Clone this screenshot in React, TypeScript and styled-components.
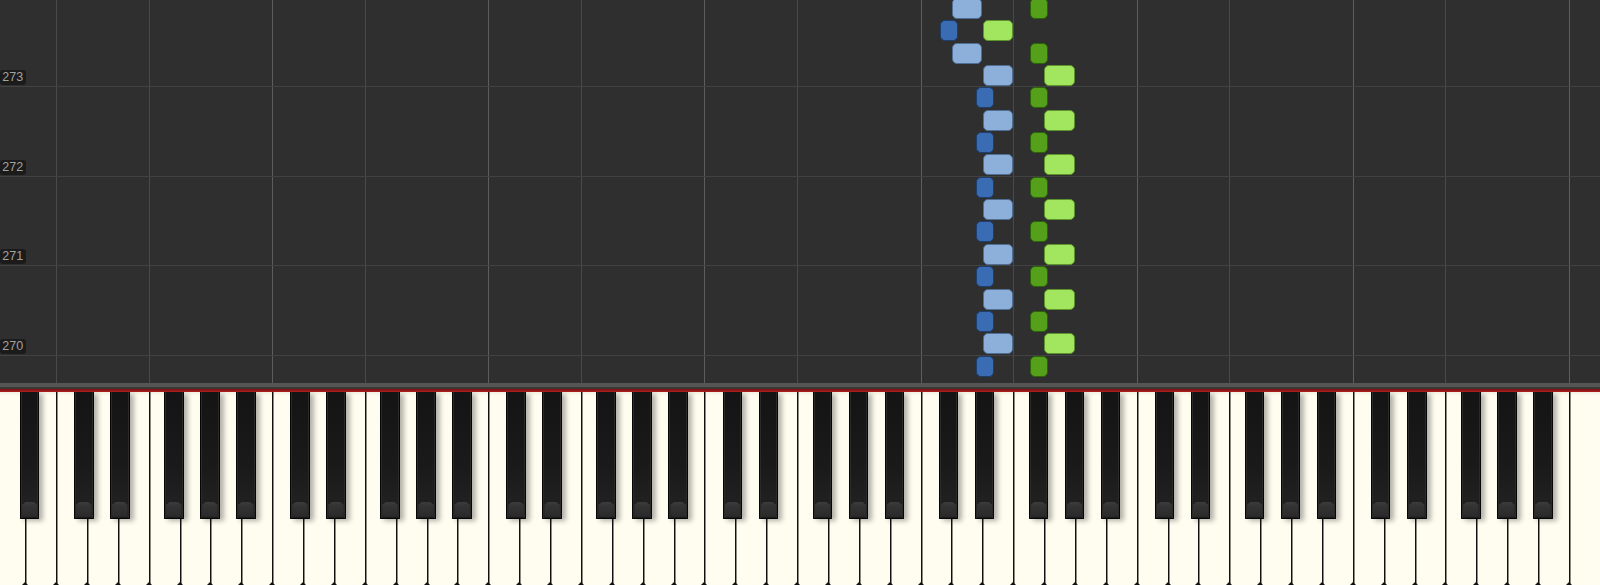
import React from "react";
import styled, { createGlobalStyle } from "styled-components";

// geometry of the 88-key keyboard (right aligned, A0 is a little cut off)
const KEY_W = 30.88;
const WHITE_COUNT = 52;
const STAGE_W = KEY_W * WHITE_COUNT;
const SEMI = (KEY_W * 7) / 12;
const ROW_H = 22.36;
const BEAT_H = ROW_H * 4;
const FIRST_ROW_TOP = 87.3 - 4 * ROW_H;

const WHITE_SEMIS = [0, 2, 4, 5, 7, 9, 11];
const SEMIS: Record<string, number> = {
  C: 0, "C#": 1, D: 2, "D#": 3, E: 4, F: 5, "F#": 6, G: 7, "G#": 8, A: 9, "A#": 10, B: 11,
};

const cLeft = (octave: number) => (2 + 7 * (octave - 1)) * KEY_W;

function keyGeom(name: string, octave: number) {
  const semi = SEMIS[name];
  const wi = WHITE_SEMIS.indexOf(semi);
  if (wi >= 0) return { left: cLeft(octave) + wi * KEY_W, black: false };
  return { left: cLeft(octave) + semi * SEMI, black: true };
}

type Track = "blue" | "green";
type NoteEv = { row: number; name: string; octave: number; track: Track };

const NOTES: NoteEv[] = [
  { row: 0, name: "D", octave: 5, track: "blue" },
  { row: 0, name: "F#", octave: 5, track: "green" },
  { row: 1, name: "C#", octave: 5, track: "blue" },
  { row: 1, name: "E", octave: 5, track: "green" },
  { row: 2, name: "D", octave: 5, track: "blue" },
  { row: 2, name: "F#", octave: 5, track: "green" },
  { row: 3, name: "E", octave: 5, track: "blue" },
  { row: 3, name: "G", octave: 5, track: "green" },
];
for (let r = 4; r <= 16; r++) {
  if (r % 2 === 0) {
    NOTES.push({ row: r, name: "D#", octave: 5, track: "blue" });
    NOTES.push({ row: r, name: "F#", octave: 5, track: "green" });
  } else {
    NOTES.push({ row: r, name: "E", octave: 5, track: "blue" });
    NOTES.push({ row: r, name: "G", octave: 5, track: "green" });
  }
}

// measure numbers; the last band runs past the bottom, so it gets no label
const MEASURES: (number | null)[] = [273, 272, 271, 270, null];

const TONES = {
  "blue-white": { fill: "#8cb0d9", edge: "#4f6f95" },
  "blue-black": { fill: "#3a6cb3", edge: "#1d3f70" },
  "green-white": { fill: "#a2e55e", edge: "#5e942c" },
  "green-black": { fill: "#55a01a", edge: "#2c620a" },
};
type Tone = keyof typeof TONES;

const GlobalStyle = createGlobalStyle`
  html, body {
    margin: 0;
    padding: 0;
    background: #2f2f2f;
  }
`;

const Viewport = styled.div`
  width: 1600px;
  height: 585px;
  overflow: hidden;
  background: #2f2f2f;
`;

const Stage = styled.div`
  width: ${STAGE_W}px;
  margin-left: ${1600 - STAGE_W}px;
  display: flex;
  flex-direction: column;
`;

const Roll = styled.div`
  height: 383.3px;
  display: grid;
  overflow: hidden;
  background: #2f2f2f;

  & > * {
    grid-area: 1 / 1;
  }
`;

const Columns = styled.div`
  display: flex;
  height: 100%;
`;

const Column = styled.div<{ $keys: number; $line: "none" | "dim" | "bright" }>`
  flex: 0 0 ${(p) => p.$keys * KEY_W}px;
  box-sizing: border-box;
  border-left: ${(p) =>
    p.$line === "none" ? "none" : `1px solid ${p.$line === "bright" ? "#5e5e5e" : "#4a4a4a"}`};
`;

const Bands = styled.div`
  display: flex;
  flex-direction: column;
  margin-top: ${-(BEAT_H - 87.2)}px;
`;

const Band = styled.div`
  flex: 0 0 ${BEAT_H}px;
  box-sizing: border-box;
  border-bottom: 1px solid #424242;
  display: flex;
  align-items: flex-end;
  padding-bottom: 1px;
`;

const MeasureLabel = styled.span`
  margin-left: ${STAGE_W - 1600 + 0.3}px;
  padding: 0 3px 0 2px;
  height: 15px;
  line-height: 15px;
  border-radius: 3px;
  background: #1b1b1b;
  color: #a2a2a2;
  font-family: "Liberation Sans", Arial, sans-serif;
  font-size: 12.5px;
`;

const NoteLayer = styled.div`
  position: relative;
  height: 100%;
`;

const Note = styled.div<{ $tone: Tone }>`
  position: absolute;
  height: 21px;
  box-sizing: border-box;
  border-radius: 5px;
  background: ${(p) => TONES[p.$tone].fill};
  border: 1px solid ${(p) => TONES[p.$tone].edge};
`;

const Rail = styled.div`
  height: 3.6px;
  background: #555555;
`;

const RailShade = styled.div`
  height: 2.4px;
  background: #383838;
`;

const RedFelt = styled.div`
  height: 2.4px;
  background: linear-gradient(to bottom, #7a1212, #b01e1e);
`;

const Keyboard = styled.div`
  position: relative;
  height: 193.3px;
  display: flex;
  overflow: hidden;
`;

const WhiteKey = styled.div`
  position: relative;
  flex: 0 0 ${KEY_W}px;
  box-sizing: border-box;
  border-left: 1px solid #101010;
  background: linear-gradient(to bottom, #f4f0e0 0, #fffdf0 4px, #fffdf0 100%);
  box-shadow: inset 1px 0 0 rgba(0, 0, 0, 0.45);

  &::before {
    content: "";
    position: absolute;
    left: -4px;
    bottom: 0;
    border-left: 3.5px solid transparent;
    border-right: 3.5px solid transparent;
    border-bottom: 3px solid #111;
  }
`;

const BlackKey = styled.div`
  position: absolute;
  top: 0;
  height: 127px;
  width: 19.5px;
  box-sizing: border-box;
  border: 1px solid #060606;
  border-top: none;
  border-radius: 0 0 1px 1px;
  background: linear-gradient(
    to bottom,
    #141414 0%,
    #1a1a1a 60%,
    #202020 84%,
    #1c1c1c 100%
  );
  box-shadow: inset 1px 0 0 #2a2a2a, inset -1px 0 0 #2a2a2a, 4px 2px 5px rgba(0, 0, 0, 0.3);

  &::after {
    content: "";
    position: absolute;
    left: 1px;
    right: 1px;
    bottom: 1px;
    height: 15px;
    background: linear-gradient(to bottom, #3c3c3c 0, #333333 4px, #2a2a2a 100%);
    clip-path: polygon(0 3px, 25% 0, 75% 0, 100% 3px, 100% 100%, 0 100%);
  }
`;

const BLACK_KEYS: { name: string; octave: number }[] = [{ name: "A#", octave: 0 }];
for (let o = 1; o <= 7; o++) {
  for (const n of ["C#", "D#", "F#", "G#", "A#"]) BLACK_KEYS.push({ name: n, octave: o });
}

export default function App() {
  const columns: { keys: number; line: "none" | "dim" | "bright" }[] = [{ keys: 2, line: "none" }];
  for (let o = 1; o <= 7; o++) {
    columns.push({ keys: 3, line: o === 1 ? "dim" : "bright" });
    columns.push({ keys: 4, line: "dim" });
  }
  columns.push({ keys: 1, line: "bright" });

  return (
    <>
      <GlobalStyle />
      <Viewport>
        <Stage>
          <Roll>
            <Columns>
              {columns.map((c, i) => (
                <Column key={i} $keys={c.keys} $line={c.line} />
              ))}
            </Columns>
            <Bands>
              {MEASURES.map((m, i) => (
                <Band key={i}>{m !== null && <MeasureLabel>{m}</MeasureLabel>}</Band>
              ))}
            </Bands>
            <NoteLayer>
              {NOTES.map((n, i) => {
                const g = keyGeom(n.name, n.octave);
                const tone = `${n.track}-${g.black ? "black" : "white"}` as Tone;
                return (
                  <Note
                    key={i}
                    $tone={tone}
                    style={{
                      top: FIRST_ROW_TOP + n.row * ROW_H,
                      left: g.black ? g.left + 1 : g.left + 0.2,
                      width: g.black ? SEMI + 0.5 : KEY_W - 0.6,
                    }}
                  />
                );
              })}
            </NoteLayer>
          </Roll>
          <Rail />
          <RailShade />
          <RedFelt />
          <Keyboard>
            {Array.from({ length: WHITE_COUNT }, (_, i) => (
              <WhiteKey key={i} />
            ))}
            {BLACK_KEYS.map((b) => (
              <BlackKey
                key={b.name + b.octave}
                style={{ left: keyGeom(b.name, b.octave).left }}
              />
            ))}
          </Keyboard>
        </Stage>
      </Viewport>
    </>
  );
}
